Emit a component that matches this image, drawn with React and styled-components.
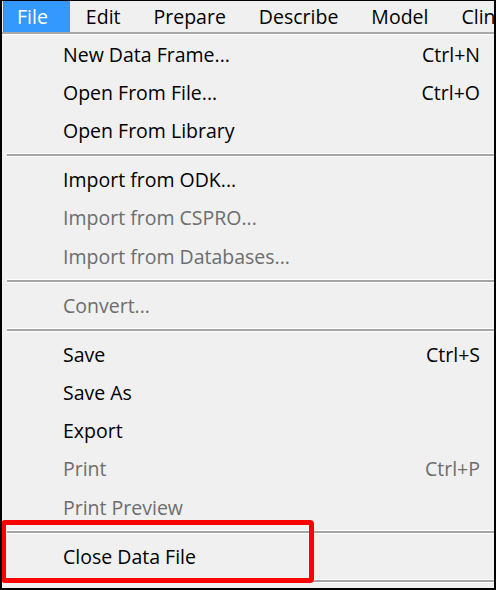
import React from 'react'
import styled, { createGlobalStyle } from 'styled-components'

const GlobalStyle = createGlobalStyle`
	body {
		margin: 0;
		background: #ffffff;
	}
`

const barItems = ['File', 'Edit', 'Prepare', 'Describe', 'Model', 'Clin']

const menu = [
	{ label: 'New Data Frame...', shortcut: 'Ctrl+N' },
	{ label: 'Open From File...', shortcut: 'Ctrl+O' },
	{ label: 'Open From Library' },
	'sep',
	{ label: 'Import from ODK...' },
	{ label: 'Import from CSPRO...', disabled: true },
	{ label: 'Import from Databases...', disabled: true },
	'sep',
	{ label: 'Convert...', disabled: true },
	'sep',
	{ label: 'Save', shortcut: 'Ctrl+S' },
	{ label: 'Save As' },
	{ label: 'Export' },
	{ label: 'Print', shortcut: 'Ctrl+P', disabled: true },
	{ label: 'Print Preview', disabled: true },
	'sep',
	{ label: 'Close Data File' },
	'sep'
]

const Frame = styled.div`
	position: relative;
	width: 496px;
	height: 590px;
	box-sizing: border-box;
	border: 2px solid #000;
	border-top-width: 1px;
	background: #f0f0f0;
	overflow: hidden;
	font-family: 'Open Sans', 'Noto Sans', sans-serif;
	font-size: 19.5px;
	font-weight: 500;
`

const MenuBar = styled.div`
	display: flex;
	height: 31px;
	padding-left: 1px;
	white-space: nowrap;
	border-bottom: 2px solid #a8a8a8;
	box-shadow: 0 1px 0 #ffffff;
`

const BarItem = styled.div`
	display: flex;
	align-items: center;
	flex-shrink: 0;
	padding-left: ${p => (p.$active ? 13 : 15)}px;
	padding-right: ${p => (p.$active ? 22 : 17)}px;
	color: ${p => (p.$active ? '#ffffff' : '#000000')};
	background: ${p => (p.$active ? '#3399ff' : 'transparent')};
	border-top: 1px solid ${p => (p.$active ? '#b5652a' : 'transparent')};
	border-left: 1px solid ${p => (p.$active ? '#b5652a' : 'transparent')};
	margin-top: -1px;
`

const Dropdown = styled.div`
	display: flex;
	flex-direction: column;
	padding-top: 1px;
`

const Item = styled.div`
	display: flex;
	align-items: center;
	justify-content: space-between;
	height: 38.25px;
	padding: 0 14px 0 61px;
	color: ${p => (p.$disabled ? '#6d6d6d' : '#000000')};
`

const Separator = styled.div`
	display: flex;
	align-items: center;
	height: 10.75px;
	padding-left: 5px;

	&::after {
		content: '';
		flex: 1;
		height: 2px;
		background: #a5a5a5;
		box-shadow: 0 -1px 0 #ffffff, 0 1px 0 #ffffff;
	}
`

const Callout = styled.div`
	position: absolute;
	left: -1px;
	top: 519px;
	width: 313px;
	height: 63px;
	box-sizing: border-box;
	border: 5px solid #ff0000;
	border-radius: 4px;
`

const App = () => {
	return (
		<>
			<GlobalStyle />
			<Frame>
				<MenuBar>
					{barItems.map((name, i) => (
						<BarItem key={name} $active={i === 0}>
							{name}
						</BarItem>
					))}
				</MenuBar>
				<Dropdown>
					{menu.map((item, i) =>
						item === 'sep' ? (
							<Separator key={i} />
						) : (
							<Item key={i} $disabled={item.disabled}>
								<span>{item.label}</span>
								{item.shortcut && <span>{item.shortcut}</span>}
							</Item>
						)
					)}
				</Dropdown>
				<Callout />
			</Frame>
		</>
	)
}

export default App
